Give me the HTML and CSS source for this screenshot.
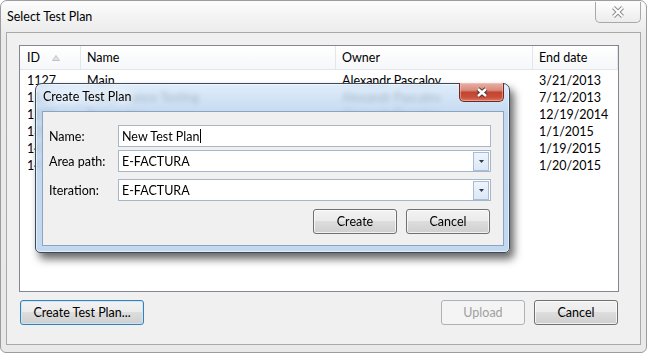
FILE: index.html
```html
<!DOCTYPE html>
<html lang="en">
<head>
    <meta charset="UTF-8">
    <title>Select Test Plan</title>
    <link rel="stylesheet" href="styles.css">
</head>
<body>
    <div class="window">
        <div class="titlebar">
            <span class="title">Select Test Plan</span>
            <button class="close-btn" type="button">
                <svg width="14" height="12" viewBox="0 0 14 12">
                    <path d="M2.5 1.5L11.5 10.5M11.5 1.5L2.5 10.5" stroke="#8c8c8c" stroke-width="4"/>
                    <path d="M2.5 1.5L11.5 10.5M11.5 1.5L2.5 10.5" stroke="#fff" stroke-width="2"/>
                </svg>
            </button>
        </div>

        <div class="client">
            <div class="plans">
                <div class="plans-head">
                    <div class="cell">ID
                        <svg class="sort" width="8" height="6" viewBox="0 0 8 6">
                            <path d="M4 0.5L7.5 5.5H0.5Z" fill="#e4e4e4" stroke="#c2c2c2"/>
                        </svg>
                    </div>
                    <div class="cell">Name</div>
                    <div class="cell">Owner</div>
                    <div class="cell">End date</div>
                </div>
                <div class="plans-body">
                    <div class="row"><span>1127</span><span>Main</span><span>Alexandr Pascalov</span><span>3/21/2013</span></div>
                    <div class="row"><span>1128</span><span>Performance Testing</span><span>Alexandr Pascalov</span><span>7/12/2013</span></div>
                    <div class="row"><span>1185</span><span>Regression</span><span>Alexandr Pascalov</span><span>12/19/2014</span></div>
                    <div class="row"><span>1306</span><span>Release 2015</span><span>Alexandr Pascalov</span><span>1/1/2015</span></div>
                    <div class="row"><span>1412</span><span>Sprint 1</span><span>Alexandr Pascalov</span><span>1/19/2015</span></div>
                    <div class="row"><span>1413</span><span>Sprint 2</span><span>Alexandr Pascalov</span><span>1/20/2015</span></div>
                </div>
            </div>

            <div class="actions">
                <button class="btn btn-default" type="button">Create Test Plan...</button>
                <button class="btn btn-upload" type="button" disabled>Upload</button>
                <button class="btn" type="button">Cancel</button>
            </div>
        </div>

        <!-- modal dialog on top of the main window -->
        <div class="dialog">
            <div class="dialog-titlebar">
                <span class="dialog-title">Create Test Plan</span>
                <button class="dialog-close" type="button">
                    <svg width="14" height="11" viewBox="0 0 14 11">
                        <path d="M3 2L11 9M11 2L3 9" stroke="#5a3330" stroke-width="4.5"/>
                        <path d="M3 2L11 9M11 2L3 9" stroke="#fff" stroke-width="2.5"/>
                    </svg>
                </button>
            </div>
            <div class="dialog-client">
                <div class="form-row">
                    <label>Name:</label>
                    <div class="field">New Test Plan<span class="caret"></span></div>
                </div>
                <div class="form-row row-area">
                    <label>Area path:</label>
                    <div class="field combo">E-FACTURA
                        <span class="combo-arrow">
                            <svg width="5" height="3" viewBox="0 0 5 3"><path d="M0 0H5L2.5 3Z" fill="#2c3a4a"/></svg>
                        </span>
                    </div>
                </div>
                <div class="form-row row-iter">
                    <label>Iteration:</label>
                    <div class="field combo">E-FACTURA
                        <span class="combo-arrow">
                            <svg width="5" height="3" viewBox="0 0 5 3"><path d="M0 0H5L2.5 3Z" fill="#2c3a4a"/></svg>
                        </span>
                    </div>
                </div>
                <div class="dialog-buttons">
                    <button class="btn" type="button">Create</button>
                    <button class="btn" type="button">Cancel</button>
                </div>
            </div>
        </div>
    </div>
</body>
</html>
```

FILE: styles.css
```css
* {
    box-sizing: border-box;
}
body {
    margin: 0;
    background: #fff;
    font-family: "Segoe UI", Lato, "Open Sans", sans-serif;
    font-size: 12.5px;
    color: #000;
}
.window {
    position: relative;
    width: 647px;
    height: 353px;
    border: 1px solid #9c9c9c;
    border-radius: 7px 7px 6px 6px;
    background: linear-gradient(to bottom, #fcfcfc, #eaeaea 34px, #e9e9e9);
}
.titlebar {
    display: flex;
    justify-content: space-between;
    align-items: flex-start;
    height: 31px;
}
.title {
    margin: 8px 0 0 6px;
    line-height: 16px;
}
.close-btn {
    display: flex;
    align-items: center;
    justify-content: center;
    width: 46px;
    height: 21px;
    margin: 1px 5px 0 0;
    padding: 0;
    border: 1px solid #a8a8a8;
    border-top: none;
    border-radius: 0 0 5px 5px;
    background: linear-gradient(#fdfdfd, #ececec);
}
.client {
    height: 313px;
    margin: 0 5px;
    padding: 12px 0 0 12px;
    border: 1px solid #a9a9a9;
    background: #f0f0f0;
}
.plans {
    width: 600px;
    height: 247px;
    border: 1px solid #828790;
    background: #fff;
}
.plans-head,
.row {
    display: grid;
    grid-template-columns: 61px 255px 197px 1fr;
}
.plans-head {
    height: 24px;
    border-bottom: 1px solid #e2e5e9;
    background: linear-gradient(#ffffff, #f6f7f9);
}
.plans-head .cell {
    display: flex;
    align-items: center;
    padding-left: 6px;
    border-right: 1px solid #e3e6ea;
}
.plans-head .cell:first-child {
    padding-left: 7px;
}
.sort {
    margin-left: 12px;
}
.plans-body {
    padding-top: 2px;
}
.row {
    height: 17px;
    line-height: 17px;
}
.row span {
    padding-left: 6px;
    white-space: nowrap;
    overflow: hidden;
}
.row span:first-child {
    padding-left: 7px;
}
.actions {
    display: flex;
    gap: 9px;
    width: 598px;
    margin: 8px 0 0 1px;
}
.btn {
    width: 84px;
    height: 25px;
    padding: 0;
    border: 1px solid #707070;
    border-radius: 3px;
    background: linear-gradient(#f2f2f2, #ebebeb 50%, #dddddd 50%, #cfcfcf);
    box-shadow: inset 0 0 0 1px rgba(255, 255, 255, 0.7);
    font: inherit;
    color: #000;
}
.btn-default {
    width: 124px;
    border-color: #3c7fb1;
    box-shadow: inset 0 0 0 1px #c4e8fa;
}
.btn-upload {
    margin-left: auto;
    border-color: #adb2b5;
    background: #f4f4f4;
    box-shadow: none;
    color: #a0a0a0;
}

/* Create Test Plan dialog */
.dialog {
    position: absolute;
    left: 34px;
    top: 82px;
    width: 475px;
    height: 170px;
    padding: 0 5px 6px 6px;
    border: 1px solid #3a4858;
    border-radius: 7px 7px 5px 5px;
    background: linear-gradient(to bottom, rgba(214, 232, 249, 0.78), rgba(188, 212, 238, 0.88) 30px, rgba(190, 214, 240, 0.94));
    backdrop-filter: blur(2.5px);
    box-shadow: inset 0 0 0 1px rgba(255, 255, 255, 0.55), 4px 6px 9px rgba(0, 0, 0, 0.6);
}
.dialog-titlebar {
    display: flex;
    justify-content: space-between;
    align-items: flex-start;
    height: 27px;
}
.dialog-title {
    margin: 5px 0 0 1px;
    line-height: 16px;
    text-shadow: 0 0 6px #fff, 0 0 10px #fff, 0 0 14px #fff;
}
.dialog-close {
    display: flex;
    align-items: center;
    justify-content: center;
    width: 45px;
    height: 19px;
    margin: -1px 0 0 0;
    padding: 0;
    border: 1px solid #6c2a22;
    border-top: none;
    border-radius: 0 0 5px 5px;
    background: linear-gradient(#e8b0a6, #d98b7d 40%, #c24430 52%, #c9503c 80%, #dc7a66);
    box-shadow: inset 0 0 0 1px rgba(255, 200, 190, 0.5);
}
.dialog-client {
    height: 135px;
    padding: 13px 12px 0 6px;
    border: 1px solid #8ea3bd;
    background: #f0f0f0;
}
.form-row {
    display: grid;
    grid-template-columns: 69px 1fr;
    align-items: center;
}
.row-area {
    margin-top: 3px;
}
.row-iter {
    margin-top: 7px;
}
.field {
    display: flex;
    align-items: center;
    height: 22px;
    padding-left: 3px;
    border: 1px solid #a8b6c9;
    background: #fff;
}
.caret {
    width: 1px;
    height: 14px;
    margin-left: 1px;
    background: #000;
}
.combo {
    justify-content: space-between;
    padding-right: 1px;
}
.combo-arrow {
    display: flex;
    align-items: center;
    justify-content: center;
    width: 16px;
    height: 19px;
    border: 1px solid #a7bcd6;
    background: linear-gradient(#eef4fb, #dbe8f6);
}
.dialog-buttons {
    display: flex;
    justify-content: flex-end;
    gap: 9px;
    margin: 8px 1px 0 0;
}
```
